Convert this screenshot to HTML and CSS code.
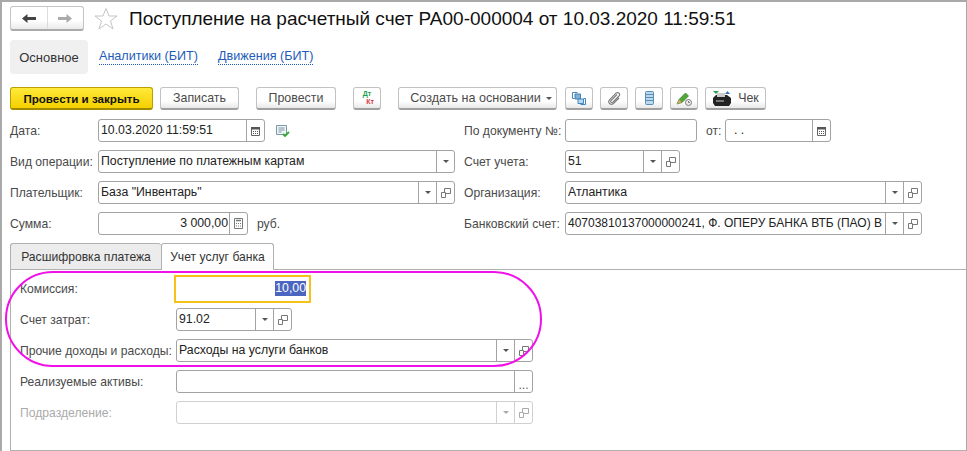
FILE: index.html
```html
<!DOCTYPE html>
<html lang="ru">
<head>
<meta charset="utf-8">
<title>Поступление на расчетный счет</title>
<link rel="stylesheet" href="styles.css">
</head>
<body>
<div class="window">
  <header class="titlebar">
    <div class="nav">
      <span class="nav-btn"><svg width="14" height="11" viewBox="0 0 14 11"><path d="M0 5.500 5.500 1v3H14v3H5.500v3z" fill="#444"/></svg></span>
      <span class="nav-btn"><svg width="14" height="11" viewBox="0 0 14 11"><path d="M14 5.500 8.500 1v3H0v3h8.500v3z" fill="#aaa"/></svg></span>
    </div>
    <svg class="star" width="24" height="24" viewBox="0 0 24 24"><path d="M12 1.500 15 9h8l-6.500 5 2.500 8-7-5-7 5 2.500-8L1 9h8z" fill="#fff" stroke="#c4c4c4"/></svg>
    <h1 class="title">Поступление на расчетный счет РА00-000004 от 10.03.2020 11:59:51</h1>
  </header>

  <nav class="sections">
    <span class="section current">Основное</span>
    <a class="section-link first">Аналитики (БИТ)</a>
    <a class="section-link second">Движения (БИТ)</a>
  </nav>

  <div class="toolbar">
    <button class="btn primary w143">Провести и закрыть</button>
    <button class="btn w79 ml7">Записать</button>
    <button class="btn w80 ml17">Провести</button>
    <button class="btn icon ml17"><span class="dtkt"><span class="dt">Дт</span><span class="kt">Кт</span></span></button>
    <button class="btn w159 ml17 create-btn"><span class="create">Создать на основании</span><i class="caret"></i></button>
    <button class="btn icon ml8"><svg width="14" height="15" viewBox="0 0 14 15" fill="none"><path d="M.5 1.500h5M.5 1.500v6h2M13.500 13.500h-5M13.500 13.500v-6h-2" stroke="#3f86c0"/><path d="M3 3h5.500v5H3z" fill="#7fb2d8" stroke="#3f7fae"/><path d="M6 8h5.500v4.500H6z" fill="#bcd8ec" stroke="#3f86c0"/></svg></button>
    <button class="btn icon ml7"><svg width="14" height="14" viewBox="0 0 14 14" fill="none" stroke="#777" stroke-width="1.100"><path d="M10 3.500 4 9.500c-1 1.300.6 2.600 1.800 1.600L12 5c1.800-2-1-4.500-3-2.800L2.500 8.800c-2.300 2.800 1.200 5.800 3.900 3.700L12 7"/></svg></button>
    <button class="btn icon ml7"><svg width="9" height="14" viewBox="0 0 9 14" fill="#bcd8ec" stroke="#5a8db5"><rect x=".5" y=".5" width="8" height="13" rx="1"/><path d="M.5 3.500h8M.5 6.500h8M.5 9.500h8"/></svg></button>
    <button class="btn icon ml7"><svg width="17" height="17" viewBox="0 0 17 17"><path d="M1 14 3 9.500 9.500 3l3 3L6 12.500z" fill="#55a53a" stroke="#2f7a22" stroke-width=".7"/><path d="M1 14l2-4.500 2.800 2.800z" fill="#d9a860"/><circle cx="12.500" cy="12.500" r="3" fill="#eee" stroke="#777"/><path d="M12.500 11v1.500h1.300" fill="none" stroke="#555" stroke-width=".8"/></svg></button>
    <button class="btn w61 ml7 receipt"><svg width="20" height="17" viewBox="0 0 20 17"><path d="M1 1h6L4 4z" fill="#2e9e4f"/><path d="M13 4l2.500-3L18 4z" fill="#3b6fc2"/><path d="M1 8l3-3h11l4 3v5l-2 3H3l-2-3z" fill="#222"/><path d="M5 3h8v4H5z" fill="#ccc"/><path d="M4 10h8v2H4z" fill="#777"/></svg><span>Чек</span></button>
  </div>

  <section class="form">
    <div class="col left">
      <div class="row">
        <label class="lab lw88">Дата:</label>
        <div class="field w167"><span class="val">10.03.2020 11:59:51</span><span class="fb"><svg width="9" height="10" viewBox="0 0 9 10"><path d="M.5 1.500h8v8h-8z" fill="#fff" stroke="#666"/><path d="M0 1h9v2.500H0z" fill="#555"/><path d="M2 5h1v1H2zM4 5h1v1H4zM6 5h1v1H6zM2 7h1v1H2zM4 7h1v1H4zM6 7h1v1H6z" fill="#555"/></svg></span></div>
        <svg class="note" width="14" height="14" viewBox="0 0 14 14"><path d="M.5 1.500h10v9H.5z" fill="#eef3f5" stroke="#7d97a8"/><path d="M2.500 4h6M2.500 6h6M2.500 8h3" stroke="#7d97a8"/><path d="M7 10l2 2 4-4" fill="none" stroke="#35a835" stroke-width="1.800"/></svg>
      </div>
      <div class="row">
        <label class="lab lw88">Вид операции:</label>
        <div class="field w357"><span class="val">Поступление по платежным картам</span><span class="fb"><i class="tri"></i></span></div>
      </div>
      <div class="row">
        <label class="lab lw88">Плательщик:</label>
        <div class="field w357"><span class="val">База "Инвентарь"</span><span class="fb"><i class="tri"></i></span><span class="fb"><svg width="10" height="10" viewBox="0 0 10 10" fill="#fff" stroke="#777"><path d="M3.500.5h6v5h-6z"/><path d="M.5 4.500h4v5h-4z"/></svg></span></div>
      </div>
      <div class="row">
        <label class="lab lw88">Сумма:</label>
        <div class="field w150"><span class="val right">3 000,00</span><span class="fb"><svg width="9" height="11" viewBox="0 0 9 11" fill="none" stroke="#777"><path d="M.5.500h8v10h-8z"/><path d="M2 2.500h5" stroke-width="1.500"/><path d="M2 5.500h1M4 5.500h1M6 5.500h1M2 8h1M4 8h1M6 8h1"/></svg></span></div>
        <span class="unit">руб.</span>
      </div>
    </div>
    <div class="col right-col">
      <div class="row">
        <label class="lab lw101">По документу №:</label>
        <div class="field w132"></div>
        <label class="lab from">от:</label>
        <div class="field w106"><span class="val dots">. .</span><span class="fb"><svg width="9" height="10" viewBox="0 0 9 10"><path d="M.5 1.500h8v8h-8z" fill="#fff" stroke="#666"/><path d="M0 1h9v2.500H0z" fill="#555"/><path d="M2 5h1v1H2zM4 5h1v1H4zM6 5h1v1H6zM2 7h1v1H2zM4 7h1v1H4zM6 7h1v1H6z" fill="#555"/></svg></span></div>
      </div>
      <div class="row">
        <label class="lab lw101">Счет учета:</label>
        <div class="field w115"><span class="val">51</span><span class="fb"><i class="tri"></i></span><span class="fb"><svg width="10" height="10" viewBox="0 0 10 10" fill="#fff" stroke="#777"><path d="M3.500.5h6v5h-6z"/><path d="M.5 4.500h4v5h-4z"/></svg></span></div>
      </div>
      <div class="row">
        <label class="lab lw101">Организация:</label>
        <div class="field w357"><span class="val">Атлантика</span><span class="fb"><i class="tri"></i></span><span class="fb"><svg width="10" height="10" viewBox="0 0 10 10" fill="#fff" stroke="#777"><path d="M3.500.5h6v5h-6z"/><path d="M.5 4.500h4v5h-4z"/></svg></span></div>
      </div>
      <div class="row">
        <label class="lab lw101">Банковский счет:</label>
        <div class="field w357"><span class="val tight">40703810137000000241, Ф. ОПЕРУ БАНКА ВТБ (ПАО) В</span><span class="fb"><i class="tri"></i></span><span class="fb"><svg width="10" height="10" viewBox="0 0 10 10" fill="#fff" stroke="#777"><path d="M3.500.5h6v5h-6z"/><path d="M.5 4.500h4v5h-4z"/></svg></span></div>
      </div>
    </div>
  </section>

  <div class="tabs">
    <span class="tab inactive">Расшифровка платежа</span>
    <span class="tab active">Учет услуг банка</span>
    <span class="tab-rest"></span>
  </div>

  <section class="panel">
    <div class="row">
      <label class="lab lw154">Комиссия:</label>
      <div class="focus"><span class="sel">10,00</span></div>
    </div>
    <div class="row">
      <label class="lab lw156">Счет затрат:</label>
      <div class="field w116"><span class="val">91.02</span><span class="fb"><i class="tri"></i></span><span class="fb"><svg width="10" height="10" viewBox="0 0 10 10" fill="#fff" stroke="#777"><path d="M3.500.5h6v5h-6z"/><path d="M.5 4.500h4v5h-4z"/></svg></span></div>
    </div>
    <div class="row">
      <label class="lab lw156">Прочие доходы и расходы:</label>
      <div class="field w357"><span class="val">Расходы на услуги банков</span><span class="fb"><i class="tri"></i></span><span class="fb"><svg width="10" height="10" viewBox="0 0 10 10" fill="#fff" stroke="#777"><path d="M3.500.5h6v5h-6z"/><path d="M.5 4.500h4v5h-4z"/></svg></span></div>
    </div>
    <div class="row">
      <label class="lab lw156">Реализуемые активы:</label>
      <div class="field w357"><span class="val"></span><span class="fb dots-btn">...</span></div>
    </div>
    <div class="row disabled">
      <label class="lab lw156">Подразделение:</label>
      <div class="field w357"><span class="val"></span><span class="fb"><i class="tri"></i></span><span class="fb"><svg width="10" height="10" viewBox="0 0 10 10" fill="#fff" stroke="#aaa"><path d="M3.500.5h6v5h-6z"/><path d="M.5 4.500h4v5h-4z"/></svg></span></div>
    </div>
  </section>

  <svg class="oval" width="538" height="97" viewBox="0 0 538 97"><rect x="1" y="1" width="535" height="94" rx="47" ry="47" fill="none" stroke="#f010e8" stroke-width="2"/></svg>
</div>
</body>
</html>
```
FILE: styles.css
```css
* { box-sizing: border-box; }
html, body { margin: 0; padding: 0; background: #fff; }
body { font-family: "Liberation Sans", Arial, sans-serif; font-size: 12.15px; color: #4a4a4a; }
.window { position: relative; width: 967px; height: 451px; overflow: hidden; border-top: 2px solid #a9a9a9; border-left: 2px solid #a9a9a9; border-right: 1px solid #a9a9a9; background: #fff; padding-left: 8px; display: flex; flex-direction: column; }

.titlebar { display: flex; align-items: center; height: 27px; margin-top: 3px; }
.nav { display: flex; width: 74px; height: 25px; border: 1px solid #c4c4c4; border-bottom: 2px solid #aaa; border-radius: 3px; background: linear-gradient(#fff 60%, #eaeaea); }
.nav-btn { flex: 1; display: flex; align-items: center; justify-content: center; }
.nav-btn + .nav-btn { border-left: 1px solid #dcdcdc; }
.star { margin-left: 10px; flex: none; }
.title { margin: 0 0 0 11px; font-size: 19px; font-weight: 400; color: #111; white-space: nowrap; line-height: 24px; }

.sections { display: flex; align-items: center; height: 34px; margin-top: 8px; font-size: 12.6px; }
.section.current { display: flex; align-items: center; justify-content: center; width: 78px; height: 34px; background: #f0f0f0; border-radius: 4px; color: #333; font-size: 13px; }
.section-link { color: #1d5cb8; border-bottom: 1px dotted #1d5cb8; line-height: 15px; }
.section-link.first { margin-left: 11px; }
.section-link.second { margin-left: 20px; }

.toolbar { display: flex; height: 23px; margin-top: 13px; }
.btn { height: 23px; padding: 0; font: 12.4px "Liberation Sans", Arial, sans-serif; color: #4a4a4a; background: linear-gradient(#fff 65%, #e8e8e8); border: 1px solid #c2c2c2; border-bottom: 2px solid #a0a0a0; border-radius: 3px; display: flex; align-items: center; justify-content: center; }
.btn.primary { background: linear-gradient(#ffe93a, #f5d000); border-color: #b9a000; border-bottom-color: #a08a00; color: #111; font-weight: 700; font-size: 11.6px; }
.btn.icon { width: 28px; }
.create-btn { padding-left: 7px; }
.w143 { width: 143px; }
.w79 { width: 79px; }
.w80 { width: 80px; }
.w159 { width: 159px; }
.w61 { width: 61px; }
.ml7 { margin-left: 7px; }
.ml8 { margin-left: 8px; }
.ml17 { margin-left: 17px; }
.create { font-size: 12.6px; }
.caret { width: 0; height: 0; margin-left: 5px; border: 3px solid transparent; border-top: 3px solid #555; border-bottom: 0; }
.receipt span { margin-left: 6px; }
.dtkt { display: flex; flex-direction: column; width: 16px; font-size: 7px; line-height: 8px; font-weight: 700; }
.dt { color: #1e9e4a; }
.kt { color: #d8323c; margin-left: 6px; }

.form { display: flex; margin-top: 9px; }
.col { display: flex; flex-direction: column; gap: 8px; }
.col.left { width: 454px; }
.row { display: flex; align-items: center; height: 23px; }
.lab { flex: none; white-space: nowrap; }
.lw88 { width: 88px; }
.lw101 { width: 101px; }
.lw154 { width: 154px; }
.lw156 { width: 156px; }
.from { margin-left: 9px; width: 19px; }
.field { display: flex; flex: none; height: 23px; border: 1px solid #a3a3a3; border-radius: 3px; background: #fff; overflow: hidden; color: #222; font-size: 12.3px; }
.w167 { width: 167px; }
.w357 { width: 357px; }
.w150 { width: 150px; }
.w132 { width: 132px; }
.w106 { width: 106px; }
.w115 { width: 115px; }
.w116 { width: 116px; }
.val { flex: 1; min-width: 0; padding: 0 2px; line-height: 20px; white-space: nowrap; overflow: hidden; }
.val.tight { font-size: 12px; padding-right: 0; }
.val.right { text-align: right; padding-right: 1px; }
.val.dots { padding-left: 8px; }
.fb { flex: none; width: 18px; border-left: 1px solid #a3a3a3; display: flex; align-items: center; justify-content: center; }
.tri { width: 0; height: 0; border: 3px solid transparent; border-top: 3px solid #555; border-bottom: 0; }
.dots-btn { color: #666; align-items: flex-end; line-height: 14px; }
.note { margin-left: 11px; flex: none; }
.unit { margin-left: 9px; }

.tabs { display: flex; height: 27px; margin-top: 8px; align-items: flex-end; }
.tab { display: flex; align-items: center; justify-content: center; height: 27px; border: 1px solid #b0b0b0; border-radius: 3px 3px 0 0; color: #333; }
.tab.inactive { width: 151px; background: #ececec; border-right: 0; }
.tab.active { width: 113px; background: #fff; border-bottom: 0; }
.tab-rest { flex: 1; border-bottom: 1px solid #b0b0b0; }

.panel { flex: 1; display: flex; flex-direction: column; gap: 8px; padding: 7px 0 0 9px; border-left: 1px solid #b0b0b0; border-bottom: 1px solid #b0b0b0; }
.focus { width: 137px; height: 28px; border: 2px solid #f5c21a; display: flex; align-items: center; justify-content: flex-end; padding-right: 3px; flex: none; }
.sel { background: #4a66c0; color: #fff; line-height: 15px; font-size: 12.3px; }
.disabled .lab { color: #aaa; }
.disabled .field { border-color: #d0d0d0; }
.disabled .fb { border-color: #d0d0d0; }
.disabled .tri { border-top-color: #aaa; }

.oval { position: absolute; left: 3px; top: 269px; pointer-events: none; }
```
